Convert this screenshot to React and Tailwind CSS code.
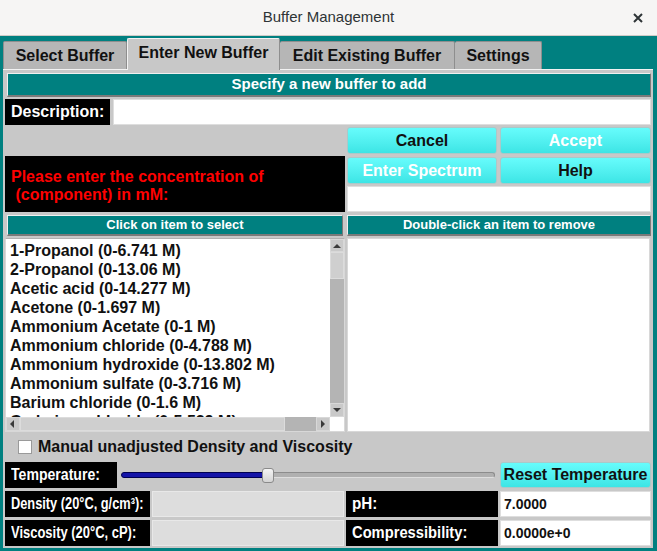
import React from "react";

const F = { fontFamily: '"Liberation Sans", Arial, sans-serif' };

const items = [
  "1-Propanol (0-6.741 M)",
  "2-Propanol (0-13.06 M)",
  "Acetic acid (0-14.277 M)",
  "Acetone (0-1.697 M)",
  "Ammonium Acetate (0-1 M)",
  "Ammonium chloride (0-4.788 M)",
  "Ammonium hydroxide (0-13.802 M)",
  "Ammonium sulfate (0-3.716 M)",
  "Barium chloride (0-1.6 M)",
  "Cadmium chloride (0-5.539 M)",
];

function CyanBtn({ children, white, className = "" }) {
  return (
    <div
      className={
        "flex items-center justify-center rounded-[3px] border border-[#a9c9c9] bg-linear-to-b from-[#66fcfc] to-[#3ce5e5] text-[16px] font-bold " +
        (white ? "text-white " : "text-[#111] ") +
        className
      }
    >
      {children}
    </div>
  );
}

function TealHeader({ children, className = "" }) {
  return (
    <div
      className={
        "flex items-center justify-center bg-[#008080] border-t border-l border-t-[#f0f0f0] border-l-[#f0f0f0] border-b-2 border-r border-b-[#7a7a7a] border-r-[#7a7a7a] text-white font-bold " +
        className
      }
    >
      {children}
    </div>
  );
}

function BlackLabel({ children, className = "", scale = "" }) {
  return (
    <div className={"flex items-center overflow-hidden bg-black text-white font-bold text-[16px] pl-[6px] " + className}>
      <span className={"inline-block whitespace-nowrap origin-left " + scale}>{children}</span>
    </div>
  );
}

function Tri({ dir }) {
  const paths = {
    up: "M1 6 L5 2 L9 6 Z",
    down: "M1 2 L5 6 L9 2 Z",
    left: "M6 1 L2 5 L6 9 Z",
    right: "M3 1 L7 5 L3 9 Z",
  };
  const v = dir === "up" || dir === "down";
  return (
    <svg width="10" height={v ? 8 : 10} viewBox={v ? "0 0 10 8" : "0 0 10 10"}>
      <path d={paths[dir]} fill="#3a3a3a" />
    </svg>
  );
}

export default function App() {
  return (
    <div className="w-[657px] h-[551px] bg-[#008080] flex flex-col overflow-hidden" style={F}>
      {/* title bar */}
      <div className="h-[36px] shrink-0 bg-[#f6f5f4] border-b border-[#cfcbc7] grid grid-cols-[1fr_auto_1fr] items-center">
        <div />
        <div className="text-[15px] text-[#2e3436]">Buffer Management</div>
        <div className="flex justify-end pr-[14px]">
          <svg width="10" height="10" viewBox="0 0 10 10">
            <path d="M1 1 L9 9 M9 1 L1 9" stroke="#2e3436" strokeWidth="2" />
          </svg>
        </div>
      </div>

      <div className="flex-1 flex flex-col pl-[3px] pr-[4px] pb-[3px]">
        {/* tabs */}
        <div className="h-[33px] shrink-0 flex items-end text-[16px] font-bold text-[#111]">
          <div className="h-[28px] w-[124px] flex items-center justify-center bg-[#b6b6b6] border border-b-0 border-[#8e8e8e] rounded-t-[2px]">
            Select Buffer
          </div>
          <div className="h-[32px] w-[153px] flex items-center justify-center bg-[#c8c8c8] border-t border-l border-r border-t-[#f2f2f2] border-l-[#f2f2f2] border-r-[#8e8e8e] rounded-t-[2px] -mb-px relative z-10 pb-[3px]">
            Enter New Buffer
          </div>
          <div className="h-[28px] w-[175px] flex items-center justify-center bg-[#b6b6b6] border border-b-0 border-l-0 border-[#8e8e8e] rounded-t-[2px]">
            Edit Existing Buffer
          </div>
          <div className="h-[28px] w-[87px] flex items-center justify-center bg-[#b6b6b6] border border-b-0 border-l-0 border-[#8e8e8e] rounded-t-[2px]">
            Settings
          </div>
        </div>

        {/* panel */}
        <div className="flex-1 bg-[#c8c8c8] border-t border-[#f2f2f2] px-[2px] pt-[3px] flex flex-col">
          <TealHeader className="h-[24px] ml-[2px] text-[15px]">Specify a new buffer to add</TealHeader>

          {/* description */}
          <div className="mt-[2px] h-[26px] flex gap-[3px]">
            <BlackLabel className="w-[105px]">Description:</BlackLabel>
            <div className="flex-1 bg-white border border-[#dedede]" />
          </div>

          {/* buttons + message */}
          <div className="mt-[2px] h-[85px] flex gap-[2px]">
            <div className="w-[340px] flex flex-col justify-end">
              <div className="h-[56px] bg-black flex flex-col justify-center pl-[6px] pt-[4px] text-[#ff0000] font-bold text-[16px] leading-[18px] whitespace-pre">
                <div>Please enter the concentration of</div>
                <div> (component) in mM:</div>
              </div>
            </div>
            <div className="flex-1 flex flex-col">
              <div className="h-[27px] flex gap-[3px]">
                <CyanBtn className="w-[150px]">Cancel</CyanBtn>
                <CyanBtn white className="flex-1">Accept</CyanBtn>
              </div>
              <div className="mt-[3px] h-[27px] flex gap-[3px]">
                <CyanBtn white className="w-[150px]">Enter Spectrum</CyanBtn>
                <CyanBtn className="flex-1">Help</CyanBtn>
              </div>
              <div className="mt-[2px] h-[26px] bg-white border border-[#dedede]" />
            </div>
          </div>

          {/* list headers */}
          <div className="mt-[3px] h-[21px] flex gap-[4px] text-[13px]">
            <TealHeader className="w-[336px] ml-[2px]">Click on item to select</TealHeader>
            <TealHeader className="flex-1">Double-click an item to remove</TealHeader>
          </div>

          {/* lists */}
          <div className="mt-[2px] h-[194px] flex gap-[2px]">
            <div className="w-[340px] flex border border-[#d8d8d8] border-t-[#b0b0b0]">
              <div className="flex-1 flex flex-col min-w-0">
                <div className="flex-1 bg-white overflow-hidden pl-[4px] pt-[2px] text-[16px] font-bold leading-[19px] text-[#111]">
                  {items.map((t) => (
                    <div key={t} className="whitespace-nowrap">
                      {t}
                    </div>
                  ))}
                </div>
                <div className="h-[14px] flex bg-[#b4b4b4]">
                  <div className="w-[14px] flex items-center justify-center bg-[#c9c9c9] border border-[#d8d8d8]">
                    <Tri dir="left" />
                  </div>
                  <div className="w-[265px] bg-[#cfcfcf] border border-[#dcdcdc]" />
                  <div className="flex-1" />
                  <div className="w-[14px] flex items-center justify-center bg-[#c9c9c9] border border-[#d8d8d8]">
                    <Tri dir="right" />
                  </div>
                </div>
              </div>
              <div className="w-[14px] flex flex-col">
                <div className="flex-1 flex flex-col bg-[#b4b4b4]">
                  <div className="h-[13px] flex items-center justify-center bg-[#c9c9c9] border border-[#d8d8d8]">
                    <Tri dir="up" />
                  </div>
                  <div className="h-[27px] bg-[#cfcfcf] border border-[#dcdcdc]" />
                  <div className="flex-1" />
                  <div className="h-[14px] flex items-center justify-center bg-[#c9c9c9] border border-[#d8d8d8]">
                    <Tri dir="down" />
                  </div>
                </div>
                <div className="h-[14px] bg-white" />
              </div>
            </div>
            <div className="flex-1 bg-white border border-[#d8d8d8] mr-[1px]" />
          </div>

          {/* checkbox row */}
          <div className="h-[27px] pt-[2px] flex items-center pl-[13px] gap-[6px] text-[16px] font-bold text-[#111]">
            <div className="w-[14px] h-[14px] bg-white border border-[#9a9a9a]" />
            <span>Manual unadjusted Density and Viscosity</span>
          </div>

          {/* temperature row */}
          <div className="mt-[3px] h-[26px] flex items-center">
            <BlackLabel className="w-[112px] h-full" scale="scale-x-[0.88]">
              Temperature:
            </BlackLabel>
            <div className="flex-1 flex items-center ml-[4px] mr-[5px]">
              <div className="w-[142px] h-[6px] bg-[#1414a8] border border-[#000050] rounded-l-full" />
              <div className="w-[12px] h-[15px] -mx-[1px] relative z-10 rounded-[3px] border border-[#8a8a8a] bg-linear-to-b from-[#f4f4f4] to-[#d4d4d4]" />
              <div className="flex-1 h-[6px] bg-[#b0b0b0] border border-[#8c8c8c] border-b-[#dedede] rounded-r-full" />
            </div>
            <CyanBtn className="w-[151px] h-full text-[15px]">Reset Temperature</CyanBtn>
          </div>

          {/* density row */}
          <div className="mt-[3px] h-[26px] flex gap-[2px]">
            <BlackLabel className="w-[145px]" scale="scale-x-[0.8]">
              Density (20°C, g/cm³):
            </BlackLabel>
            <div className="w-[192px] bg-[#dddddd] border border-[#e8e8e8]" />
            <BlackLabel className="w-[152px]" scale="scale-x-[0.95]">
              pH:
            </BlackLabel>
            <div className="flex-1 bg-white border border-[#dedede] flex items-center pl-[3px] text-[14px] font-bold text-[#111]">
              7.0000
            </div>
          </div>

          {/* viscosity row */}
          <div className="mt-[3px] h-[26px] flex gap-[2px]">
            <BlackLabel className="w-[145px]" scale="scale-x-[0.81]">
              Viscosity (20°C, cP):
            </BlackLabel>
            <div className="w-[192px] bg-[#dddddd] border border-[#e8e8e8]" />
            <BlackLabel className="w-[152px]" scale="scale-x-[0.92]">
              Compressibility:
            </BlackLabel>
            <div className="flex-1 bg-white border border-[#dedede] flex items-center pl-[3px] text-[14px] font-bold text-[#111]">
              0.0000e+0
            </div>
          </div>
        </div>
      </div>
    </div>
  );
}
